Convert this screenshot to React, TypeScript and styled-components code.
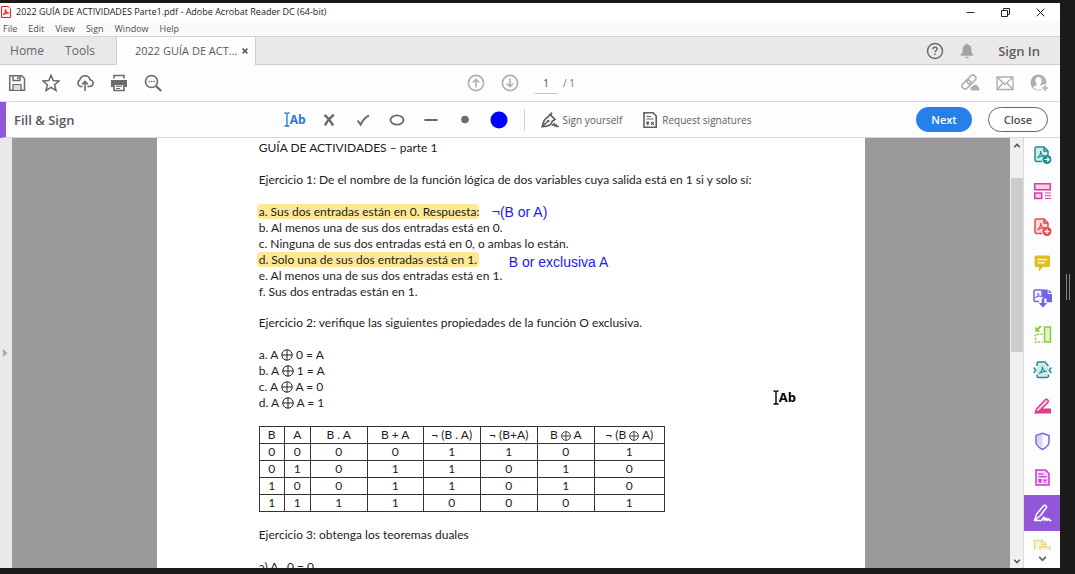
import React from "react";
import styled, { createGlobalStyle, css } from "styled-components";

const UI = `"Open Sans", "Noto Sans", sans-serif`;
const DOC = `Lato, "Open Sans", sans-serif`;
const INK = "#6b6a6c";

const GlobalStyle = createGlobalStyle`
  * { box-sizing: border-box; }
  html, body, #root { height: 100%; }
  body { margin: 0; background: #1a1a1a; font-family: ${UI}; color: #505050; overflow: hidden; }
  button { font-family: inherit; color: inherit; border: 0; padding: 0; background: none; cursor: pointer; }
  svg { display: block; flex: none; }
`;

const Screen = styled.div`
  display: flex;
  height: 100%;
`;

const AppWindow = styled.div`
  flex: 1;
  min-width: 0;
  display: flex;
  flex-direction: column;
  margin: 3px 0 6px;
  background: #fdfcfe;
  overflow: hidden;
`;

const Edge = styled.div`
  width: 15px;
  display: flex;
  align-items: center;
  justify-content: center;
  gap: 2px;
`;

const GripLine = styled.span`
  width: 1px;
  height: 26px;
  background: #858585;
`;

const TitleBar = styled.header`
  display: flex;
  align-items: center;
  height: 18px;
  padding-right: 2px;
  background: #fff;
`;

const WindowTitle = styled.h1`
  flex: 1;
  margin: 0 0 0 4px;
  font-size: 9px;
  line-height: 16px;
  font-weight: 400;
  color: #222;
  white-space: nowrap;
`;

const WindowButton = styled.button`
  display: flex;
  width: 35px;
  height: 16px;
  align-items: center;
  justify-content: center;
`;

const MenuBar = styled.nav`
  display: flex;
  gap: 11px;
  height: 15px;
  padding-left: 3px;
  background: #fbfafb;
`;

const MenuItem = styled.button`
  font-size: 9px;
  line-height: 15px;
`;

const TabBar = styled.div`
  display: flex;
  height: 29px;
  background: #eae8eb;
  border-top: 1px solid #d5d3d6;
  border-bottom: 1px solid #d0ced1;
`;

const Tab = styled.button<{ $width: number }>`
  width: ${(p) => p.$width}px;
  font-size: 12px;
  line-height: 27px;
  color: #666;
`;

const TabGroup = styled.div`
  display: flex;
  width: 116px;
  padding-left: 2px;
`;

const OpenTab = styled.div`
  display: flex;
  align-items: center;
  justify-content: space-between;
  width: 140px;
  height: 28px;
  padding: 0 7px 0 18px;
  background: #fdfcfe;
  border: solid #d0ced1;
  border-width: 0 1px;
  font-size: 11px;
  line-height: 28px;
  color: #5a5a5a;
`;

const Account = styled.div`
  display: flex;
  align-items: center;
  gap: 14px;
  margin-left: auto;
  padding-right: 20px;
`;

const SignIn = styled.button`
  margin-left: 8px;
  font-size: 13px;
  line-height: 26px;
  font-weight: 600;
  color: #5f5e60;
`;

const Bar = styled.div<{ $accent?: boolean }>`
  display: grid;
  grid-template-columns: 1fr auto 1fr;
  align-items: center;
  height: ${(p) => (p.$accent ? 36 : 37)}px;
  padding: 0 12px 0 8px;
  border-bottom: 1px solid #d9d8da;
  ${(p) =>
    p.$accent &&
    css`
      border-left: 6px solid #9256d9;
      padding-left: 8px;
    `}
`;

const Group = styled.div<{ $gap: number; $end?: boolean; $trail?: number }>`
  display: flex;
  align-items: center;
  gap: ${(p) => p.$gap}px;
  justify-content: ${(p) => (p.$end ? "flex-end" : "flex-start")};
  padding-right: ${(p) => p.$trail ?? 0}px;
`;

const IconButton = styled.button<{ $color?: string }>`
  display: flex;
  width: 18px;
  height: 18px;
  align-items: center;
  justify-content: center;
  color: ${(p) => p.$color ?? INK};
`;

const PageBox = styled.label`
  display: flex;
  align-items: center;
  gap: 6px;
  font-size: 10px;
  line-height: 20px;
  color: #777;
`;

const PageInput = styled.input`
  width: 22px;
  height: 21px;
  padding: 0;
  border: 0;
  border-bottom: 1px solid #c4c2c5;
  background: none;
  font: inherit;
  color: #5a4148;
  text-align: center;
`;

const ToolTitle = styled.h2`
  margin: 0;
  font-size: 13px;
  line-height: 20px;
  font-weight: 600;
  color: #5a595b;
`;

const Divider = styled.span`
  width: 1px;
  height: 22px;
  background: #d0ced1;
`;

const TextTool = styled.button`
  display: flex;
  align-items: center;
  gap: 4px;
  font-size: 10px;
  line-height: 20px;
  color: #606060;
  white-space: nowrap;
`;

const Pill = styled.button<{ $primary?: boolean }>`
  width: ${(p) => (p.$primary ? 56 : 60)}px;
  height: 25px;
  border-radius: 13px;
  font-size: 11px;
  font-weight: 600;
  ${(p) =>
    p.$primary
      ? css`
          background: #2680eb;
          color: #fff;
        `
      : css`
          background: #fff;
          border: 1px solid #666;
        `}
`;

const Workspace = styled.div`
  flex: 1;
  min-height: 0;
  display: flex;
`;

const NavStrip = styled.button`
  width: 12px;
  display: flex;
  align-items: center;
  padding-left: 3px;
  background: #eae8eb;
  color: #aaa8ab;
`;

const Viewer = styled.main`
  flex: 1;
  min-width: 0;
  display: flex;
  justify-content: center;
  background: #9b999b;
  overflow: hidden;
`;

const Sheet = styled.article`
  position: relative;
  width: 71%;
  padding: 2px 0 0 102px;
  background: #fff;
  font-family: ${DOC};
  font-size: 12px;
  line-height: 16px;
  color: #1c1c1c;
  white-space: nowrap;
`;

const Para = styled.p`
  margin: 0 0 16px;
`;

const Lines = styled.ul`
  list-style: none;
  margin: 0 0 15px;
  padding: 0;
`;

const Highlight = styled.mark`
  margin: 0 -2px;
  padding: 0 2px;
  border-radius: 4px;
  background: #fee893;
  color: inherit;
`;

const Note = styled.span<{ $x: number; $y: number }>`
  position: absolute;
  left: ${(p) => p.$x}px;
  top: ${(p) => p.$y}px;
  font-family: "Liberation Sans", Arial, sans-serif;
  font-size: 14px;
  line-height: 16px;
  color: #1a1af0;
`;

const Pointer = styled.span`
  position: absolute;
  left: 616px;
  top: 251px;
`;

const TruthTable = styled.table`
  width: 405px;
  margin-bottom: 15px;
  table-layout: fixed;
  border-collapse: collapse;
  th, td {
    height: 17px;
    padding: 0;
    border: 1px solid #333;
    font-weight: 400;
    line-height: 16px;
    text-align: center;
  }
`;

const OplusSvg = styled.svg`
  display: inline-block;
  vertical-align: -2px;
`;

const Scrollbar = styled.div`
  display: flex;
  flex-direction: column;
  align-items: center;
  justify-content: space-between;
  width: 14px;
  padding: 5px 0 4px;
  background: #f1eff2;
  border-right: 1px solid #dddbde;
  color: #555;
`;

const Thumb = styled.div`
  width: 12px;
  height: 174px;
  margin: 30px 0 auto;
  background: #cdcbce;
`;

const Rail = styled.aside`
  display: flex;
  flex-direction: column;
  width: 36px;
`;

const RailTool = styled.button<{ $active?: boolean }>`
  flex: 1;
  min-height: 0;
  display: flex;
  align-items: center;
  justify-content: center;
  background: ${(p) => (p.$active ? "#9256d9" : "transparent")};
`;

const RailMore = styled.button`
  height: 37px;
  display: flex;
  flex-direction: column;
  align-items: center;
  gap: 6px;
  padding-top: 8px;
  color: #666;
`;

const GlyphBox = styled.span<{ $color: string; $large?: boolean }>`
  display: flex;
  align-items: center;
  font-family: ${UI};
  font-size: ${(p) => (p.$large ? 13 : 12)}px;
  line-height: 16px;
  font-weight: 700;
  color: ${(p) => p.$color};
`;

function TextGlyph({ color, large }: { color: string; large?: boolean }) {
  return (
    <GlyphBox $color={color} $large={large}>
      <svg width="6" height="15" viewBox="0 0 6 15" fill="none" stroke="currentColor" strokeWidth={large ? 1.4 : 1.3} aria-hidden="true">
        <path d="M.5 1h2M3.500 1h2M3 1v13M.5 14h5" />
      </svg>
      Ab
    </GlyphBox>
  );
}

type IconProps = { w?: number; h?: number; sw?: number; children: React.ReactNode };

const Icon = ({ w = 18, h = 18, sw = 1.6, children }: IconProps) => (
  <svg width={w} height={h} viewBox={`0 0 ${w} ${h}`} fill="none" stroke="currentColor" strokeWidth={sw} aria-hidden="true">
    {children}
  </svg>
);

const Oplus = ({ size = 12 }: { size?: number }) => (
  <OplusSvg width={size} height={size} viewBox="0 0 12 12" fill="none" stroke="#222" role="img" aria-label="xor">
    <circle cx="6" cy="6" r="5.2" />
    <path d="M6 .8v10.4M.8 6h10.4" />
  </OplusSvg>
);

const Chevron = ({ up, w = 8 }: { up?: boolean; w?: number }) => (
  <svg width={w} height={w === 8 ? 5 : 6} viewBox="0 0 8 5" fill="none" stroke="currentColor" strokeWidth="1.5" aria-hidden="true">
    <path d={up ? "M1.2 4.2 4 1.4l2.8 2.8" : "M1.2.8 4 3.6 6.8.8"} />
  </svg>
);

const PdfMark = ({ x = 0, y = 0 }: { x?: number; y?: number }) => (
  <path
    transform={`translate(${x} ${y})`}
    strokeWidth="1.1"
    d="M1.300 8.500C3.500 7.300 4.700 5 4.600 1.500 4.800 4.500 6 6.300 8.800 6.500 6 6.200 3.500 6.900 1.300 8.500z"
  />
);

const railIcons: { name: string; color: string; art: React.ReactNode; active?: boolean }[] = [
  {
    name: "Export PDF",
    color: "#1f9090",
    art: (
      <>
        <path d="M9 15.500H3.500A1.500 1.500 0 0 1 2 14V2.500A1.500 1.500 0 0 1 3.500 1H11l4 4v4" fill="#d2e9ea" />
        <path d="M11 1v4h4" />
        <PdfMark x={3} y={3.5} />
        <circle cx="14" cy="13.5" r="4.500" fill="currentColor" stroke="none" />
        <path d="M11.500 13.500h4.500M14.200 11.500l2 2-2 2" stroke="#fff" strokeWidth="1.200" />
      </>
    ),
  },
  {
    name: "Organize Pages",
    color: "#dc3d9c",
    art: (
      <>
        <path d="M1.700 1.700h15.600v6H1.700zM1.700 11h7v5.500h-7z" fill="#f7cfe6" />
        <path d="M12 11h6M12 13.700h6M12 16.400h6" strokeWidth="1" />
      </>
    ),
  },
  {
    name: "Create PDF",
    color: "#e34850",
    art: (
      <>
        <path d="M9 15.500H3.500A1.500 1.500 0 0 1 2 14V2.500A1.500 1.500 0 0 1 3.500 1H11l4 4v4" fill="#fbd9da" />
        <path d="M11 1v4h4" />
        <PdfMark x={3} y={3.5} />
        <circle cx="14" cy="13.5" r="4.500" fill="currentColor" stroke="none" />
        <path d="M11.500 13.500h5M14 11v5" stroke="#fff" strokeWidth="1.300" />
      </>
    ),
  },
  {
    name: "Comment",
    color: "#dfbf22",
    art: (
      <>
        <path d="M3 1.500h12.500a1.500 1.500 0 0 1 1.500 1.500v8.500a1.500 1.500 0 0 1-1.500 1.500H10l-4 4.500V13H3a1.500 1.500 0 0 1-1.500-1.500V3A1.500 1.500 0 0 1 3 1.500z" fill="currentColor" stroke="none" />
        <path d="M4.500 5.500h9.500M4.500 8.800h7.500" stroke="#fff6d0" strokeWidth="1.500" />
      </>
    ),
  },
  {
    name: "Combine Files",
    color: "#6e62e8",
    art: (
      <>
        <path d="M6 12.500H2.200A1.200 1.200 0 0 1 1 11.300V2.200A1.200 1.200 0 0 1 2.200 1H9v7" />
        <path d="M9.500.5h5.200V5H19v7.300a1 1 0 0 1-1 1h-4.500V9.500h-4z" fill="currentColor" stroke="none" />
        <path d="M15.700.5 19 4h-3.300z" fill="currentColor" stroke="none" />
        <path d="M2.500 8.500C4.300 7.500 5 6 5 4c.3 2 1.200 3 3 3.500-2-.3-3.500 0-5.500 1z" strokeWidth="1" />
        <path d="M8.700 9.500h2.600v4.500h3L10 18.500 5.700 14h3z" fill="currentColor" stroke="none" />
      </>
    ),
  },
  {
    name: "Compare Files",
    color: "#8acb3c",
    art: (
      <>
        <path d="M11.500 2h6v15h-6z" fill="#e0f2c9" />
        <path d="M9.500 9.200H2.500v7.800h7" strokeDasharray="2 1.500" />
        <path d="M2.300 6.700V1.500L4 3.200 6.500 1h2.800L5.700 4.800l1.800 1.900z" fill="currentColor" stroke="none" />
      </>
    ),
  },
  {
    name: "Compress PDF",
    color: "#1f9090",
    art: (
      <>
        <path d="M4 4h11v11H4z" fill="#d2e9ea" stroke="none" />
        <path d="M4 5V2.500A1.500 1.500 0 0 1 5.500 1H12l3.500 4M15.500 13.500V15a1.500 1.500 0 0 1-1.500 1.500H5.500A1.500 1.500 0 0 1 4 15v-1.500" fill="#d2e9ea" />
        <path d="M.7 6.500 2.800 9.200.7 12M18.300 6.500l-2.100 2.700 2.100 2.800" />
        <PdfMark x={4.7} y={4} />
      </>
    ),
  },
  {
    name: "Redact",
    color: "#dc3d8c",
    art: (
      <>
        <path d="M3.500 12 12 3a1.800 1.800 0 0 1 2.800 0 1.800 1.800 0 0 1 0 2.500L6.500 14 2.500 15.500z" fill="#f9d3e5" />
        <path d="M1 16.500 5 14l3-2.500h10v5z" fill="currentColor" stroke="none" />
      </>
    ),
  },
  {
    name: "Protect",
    color: "#6e6be6",
    art: (
      <>
        <path d="M9.500 2.500v13.500c-3-1.800-5.500-3.700-5.500-6V4.300z" fill="#d7d6f8" stroke="none" />
        <path d="M9.500 1.200 16 3.500v6.500c0 3-2.800 5.500-6.500 7.500C5.800 15.500 3 13 3 10V3.500z" />
      </>
    ),
  },
  {
    name: "Request Signatures",
    color: "#c43bd0",
    art: (
      <>
        <path d="M3 2h9.500L16 5.500V17H3z" fill="#f4d6f6" />
        <path d="M5.500 6.200h5M5.500 8.600h8" strokeWidth="1.200" />
        <path d="M5.500 11h3v2.500L7 15.500l-1.500-2z" fill="currentColor" stroke="none" />
        <path d="m10.500 11.500 3 3M13.500 11.500l-3 3" strokeWidth="1.200" />
      </>
    ),
  },
  {
    name: "Fill & Sign",
    color: "#fff",
    active: true,
    art: (
      <path
        d="M1.500 16.500 3.700 10 10.500 1.800a1.500 1.500 0 0 1 2.400 0 1.600 1.600 0 0 1 .2 2.200L7.500 11.500 1.500 16.500zM1.500 16.500h7l2.500-3.500.5 3.500 2-2.500.6 2.500 1.700-1.700.7 1.700h2"
        strokeLinejoin="round"
      />
    ),
  },
];

const SignatureForm = () => (
  <Icon w={16} h={18}>
    <path d="M2 1.800h9L14.200 5v11.200H2z" />
    <path d="M4.500 5.500h4.500M4.500 8h7" strokeWidth="1" />
    <path d="M4.300 10.500H7v2.300L5.700 14.500 4.300 12.800z" fill="currentColor" stroke="none" />
    <path d="m9 11 2.800 2.800M11.800 11 9 13.800" strokeWidth="1.100" />
  </Icon>
);

const heads: React.ReactNode[] = [
  "B",
  "A",
  "B . A",
  "B + A",
  "¬ (B . A)",
  "¬ (B+A)",
  <>B <Oplus size={10} /> A</>,
  <>¬ (B <Oplus size={10} /> A)</>,
];
const colWidths = [25, 26, 57, 56, 57, 57, 57, 70];
const rows = ["00001101", "01011010", "10011010", "11110001"];

export default function App() {
  return (
    <>
      <GlobalStyle />
      <Screen>
        <AppWindow>
          <TitleBar>
            <svg width="12" height="14" viewBox="0 0 12 14" fill="none" stroke="#e8222c" aria-hidden="true">
              <path d="M1.500 1.500h6.800l2.200 2.200v8.800h-9z" fill="#fff0f0" />
              <path d="M3 9.700c2-.8 2.700-3 2.500-5.500.2 2.500 1.500 3.800 3.500 4-2.500-.3-4 0-6 1.500z" strokeWidth="1.200" />
            </svg>
            <WindowTitle>2022 GUÍA DE ACTIVIDADES Parte1.pdf - Adobe Acrobat Reader DC (64-bit)</WindowTitle>
            <WindowButton aria-label="Minimize">
              <Icon w={9} h={9} sw={1}><path d="M.5 4.500h8" stroke="#333" /></Icon>
            </WindowButton>
            <WindowButton aria-label="Restore">
              <Icon w={9} h={9} sw={1}><path d="M.5 2.500h6v6h-6zM2.500 2.500v-2h6v6h-2" stroke="#222" /></Icon>
            </WindowButton>
            <WindowButton aria-label="Close window">
              <Icon w={9} h={9} sw={1}><path d="m.7.7 7.600 7.600M8.300.7.700 8.300" stroke="#222" /></Icon>
            </WindowButton>
          </TitleBar>

          <MenuBar>
            {["File", "Edit", "View", "Sign", "Window", "Help"].map((m) => (
              <MenuItem key={m}>{m}</MenuItem>
            ))}
          </MenuBar>

          <TabBar>
            <TabGroup>
              <Tab $width={50}>Home</Tab>
              <Tab $width={56}>Tools</Tab>
            </TabGroup>
            <OpenTab>
              2022 GUÍA DE ACT...
              <button aria-label="Close tab">
                <Icon w={6} h={6} sw={1.5}><path d="m.6.6 4.800 4.800M5.400.6.600 5.400" /></Icon>
              </button>
            </OpenTab>
            <Account>
              <IconButton aria-label="Help">
                <Icon sw={1.5}>
                  <circle cx="9" cy="9" r="7.500" />
                  <path d="M6.900 7.200C7 5.800 8 5.300 9 5.300c1.300 0 2.100.7 2.100 1.700C11.100 8.500 9 8.500 9 10.300M9 11.500v1.600" />
                </Icon>
              </IconButton>
              <IconButton aria-label="Notifications" $color="#a3a1a4">
                <Icon>
                  <path d="M8 2.500a1 1 0 0 1 2 0c2.500.6 3.300 2.500 3.300 5 0 2.700.4 3.900 2 5.200v1H2.700v-1c1.600-1.300 2-2.500 2-5.200 0-2.500.8-4.400 3.300-5zM7.300 14.700h3.400a1.700 1.700 0 0 1-3.400 0z" fill="currentColor" stroke="none" />
                </Icon>
              </IconButton>
              <SignIn>Sign In</SignIn>
            </Account>
          </TabBar>

          <Bar>
            <Group $gap={16}>
              <IconButton aria-label="Save">
                <Icon sw={1.5}>
                  <path d="M1.700 1.700h12l2.800 2.800v11.800H1.700z" />
                  <path d="M5 2v4.500h7V2M10 2.500V5" />
                  <path d="M5 16v-5.500h8V16" fill="#dddcdf" strokeWidth="1.200" />
                </Icon>
              </IconButton>
              <IconButton aria-label="Star">
                <Icon sw={1.5}>
                  <path d="m9 1.200 2.200 5.400 5.900.4-4.500 3.800 1.400 5.700L9 13.400l-5 3.100 1.400-5.700L.9 7l5.900-.4z" />
                </Icon>
              </IconButton>
              <IconButton aria-label="Upload">
                <Icon>
                  <path d="M6.500 12.500h-2A3.500 3.500 0 0 1 3.800 6C4.500 3.300 6.500 1.800 9 1.800c2.600 0 4.500 1.700 5 4a3.300 3.300 0 0 1-.5 6.700h-2M9 17V8M6 10.500l3-3 3 3" />
                </Icon>
              </IconButton>
              <IconButton aria-label="Print">
                <Icon>
                  <path d="M4 4.500V1.500h10v3" />
                  <path d="M1 6h16v7h-2.500v-2.500h-11V13H1z" fill="currentColor" stroke="none" />
                  <path d="M4 10.500h10v6H4z" fill="#fff" />
                  <path d="M6 12.300h6M6 14.500h4" strokeWidth="1" />
                </Icon>
              </IconButton>
              <IconButton aria-label="Find">
                <Icon>
                  <circle cx="7.500" cy="7.500" r="6" />
                  <path d="m12 12 5.200 5" strokeWidth="2.300" />
                  <path d="M4.500 7.500h6.500" strokeDasharray="1.400 1.100" />
                </Icon>
              </IconButton>
            </Group>
            <Group $gap={16} $trail={14}>
              <IconButton aria-label="Previous page" $color="#b0aeb1">
                <Icon><circle cx="9" cy="9" r="7.600" /><path d="M9 13.500V5.500M5.800 8.500 9 5.300l3.200 3.200" /></Icon>
              </IconButton>
              <IconButton aria-label="Next page" $color="#b0aeb1">
                <Icon><circle cx="9" cy="9" r="7.600" /><path d="M9 4.500v8M5.800 9.500 9 12.700l3.200-3.200" /></Icon>
              </IconButton>
              <PageBox>
                <PageInput defaultValue="1" aria-label="Page number" />
                / 1
              </PageBox>
            </Group>
            <Group $gap={16} $end>
              <IconButton aria-label="Share link" $color="#b0aeb1">
                <Icon w={20} h={18}>
                  <g transform="rotate(-45 8 8)">
                    <rect x="-.5" y="5" width="10" height="6" rx="3" />
                    <rect x="6.500" y="5" width="10" height="6" rx="3" />
                  </g>
                  <path d="M11.500 17a2.500 2.500 0 0 1-.2-5 3.300 3.300 0 0 1 6.200.8 2.200 2.200 0 0 1 0 4.200z" fill="currentColor" stroke="#fdfcfe" strokeWidth="1" />
                </Icon>
              </IconButton>
              <IconButton aria-label="Email" $color="#b0aeb1">
                <Icon sw={1.3}><path d="M1 3h16v12.500H1zM1 3l8 7.500L17 3M1 15.500l6-6.500M17 15.500 11 9" /></Icon>
              </IconButton>
              <IconButton aria-label="Add people" $color="#b0aeb1">
                <Icon>
                  <circle cx="8.500" cy="8.500" r="8" fill="currentColor" stroke="none" />
                  <path d="M8.500 3c2 0 3.200 1.500 3.200 3.500 0 1.700-.7 3-1.500 3.800 0 1.500 2.800 1.500 3.500 3-1 1.500-3 2.500-5.200 2.500s-4.200-1-5.200-2.500c.7-1.500 3.500-1.500 3.500-3-.8-.8-1.500-2.100-1.500-3.800C5.300 4.500 6.500 3 8.500 3z" fill="#fdfcfe" stroke="none" />
                  <circle cx="15" cy="14" r="4" fill="#fdfcfe" stroke="none" />
                  <path d="M12 14h6M15 11v6" />
                </Icon>
              </IconButton>
            </Group>
          </Bar>

          <Bar $accent>
            <ToolTitle>Fill &amp; Sign</ToolTitle>
            <Group $gap={16} $trail={25}>
              <IconButton aria-label="Add text">
                <TextGlyph color="#2a78d0" />
              </IconButton>
              <IconButton aria-label="Cross mark">
                <Icon sw={2.4}><path d="M4.500 4C7 6 11 11 13.200 14.500M13.800 3.800C10.500 6.500 6.500 11 5 14.500" /></Icon>
              </IconButton>
              <IconButton aria-label="Check mark">
                <Icon sw={2}><path d="m3.500 9.500 3.200 4C8.500 9.500 11.500 6 15 4.300" /></Icon>
              </IconButton>
              <IconButton aria-label="Circle">
                <Icon sw={1.8}><ellipse cx="9" cy="9" rx="6.500" ry="4.700" /></Icon>
              </IconButton>
              <IconButton aria-label="Line">
                <Icon sw={2.2}><path d="M3.200 9h11.600" strokeLinecap="round" /></Icon>
              </IconButton>
              <IconButton aria-label="Dot">
                <Icon><circle cx="9" cy="8.500" r="3.800" fill="currentColor" stroke="none" /></Icon>
              </IconButton>
              <IconButton aria-label="Colour" $color="#0000ff">
                <Icon><circle cx="9" cy="9" r="8.500" fill="currentColor" stroke="none" /></Icon>
              </IconButton>
              <Divider />
              <Group $gap={20}>
                <TextTool>
                  <Icon>
                    <path d="M1.200 15.800C2 11 3.500 7.500 7 6l2-2.500 5 5L11 10.500c0 3-3 4.800-9.800 5.300zM1.500 15.500l5-5" />
                    <path d="m9.500 4 1.500-2.500M11 14.800l2-2 .7 2.200 1.500-1.200.8 1.700h1.800" />
                    <circle cx="7.300" cy="10" r="1.300" fill="currentColor" stroke="none" />
                  </Icon>
                  Sign yourself
                </TextTool>
                <TextTool>
                  <SignatureForm />
                  Request signatures
                </TextTool>
              </Group>
            </Group>
            <Group $gap={16} $end>
              <Pill $primary>Next</Pill>
              <Pill>Close</Pill>
            </Group>
          </Bar>

          <Workspace>
            <NavStrip aria-label="Show navigation pane">
              <svg width="5" height="8" viewBox="0 0 5 8" fill="currentColor" aria-hidden="true"><path d="M0 0l4.500 4L0 8z" /></svg>
            </NavStrip>
            <Viewer>
              <Sheet>
                <Para>GUÍA DE ACTIVIDADES – parte 1</Para>
                <Para>Ejercicio 1: De el nombre de la función lógica de dos variables cuya salida está en 1 si y solo sí:</Para>
                <Lines>
                  <li><Highlight>a. Sus dos entradas están en 0. Respuesta</Highlight>:</li>
                  <li>b. Al menos una de sus dos entradas está en 0.</li>
                  <li>c. Ninguna de sus dos entradas está en 0, o ambas lo están.</li>
                  <li><Highlight>d. Solo una de sus dos entradas está en 1.</Highlight></li>
                  <li>e. Al menos una de sus dos entradas está en 1.</li>
                  <li>f. Sus dos entradas están en 1.</li>
                </Lines>
                <Para>Ejercicio 2: verifique las siguientes propiedades de la función O exclusiva.</Para>
                <Lines>
                  <li>a. A <Oplus /> 0 = A</li>
                  <li>b. A <Oplus /> 1 = A</li>
                  <li>c. A <Oplus /> A = 0</li>
                  <li>d. A <Oplus /> A = 1</li>
                </Lines>
                <TruthTable>
                  <colgroup>
                    {colWidths.map((w, i) => <col key={i} width={w} />)}
                  </colgroup>
                  <thead>
                    <tr>{heads.map((h, i) => <th key={i} scope="col">{h}</th>)}</tr>
                  </thead>
                  <tbody>
                    {rows.map((r) => (
                      <tr key={r}>{r.split("").map((v, i) => <td key={i}>{v}</td>)}</tr>
                    ))}
                  </tbody>
                </TruthTable>
                <Para>Ejercicio 3: obtenga los teoremas duales</Para>
                <Para>a) A . 0 = 0</Para>
                <Note $x={335} $y={66}>¬(B or A)</Note>
                <Note $x={352} $y={116}>B or exclusiva A</Note>
                <Pointer><TextGlyph color="#000" large /></Pointer>
              </Sheet>
            </Viewer>
            <Scrollbar>
              <Chevron up />
              <Thumb />
              <Chevron />
            </Scrollbar>
            <Rail>
              {railIcons.map((t) => (
                <RailTool key={t.name} $active={t.active} aria-label={t.name}>
                  <svg width="19" height="19" viewBox="0 0 19 19" fill="none" stroke="currentColor" strokeWidth="1.500" color={t.color} aria-hidden="true">
                    {t.art}
                  </svg>
                </RailTool>
              ))}
              <RailMore aria-label="More tools">
                <svg width="18" height="11" viewBox="0 0 18 11" fill="none" stroke="#ead98a" strokeWidth="1.500" aria-hidden="true">
                  <path d="M1.500 11V1.500h8L13 5v2.500" fill="#fbf4d4" />
                  <path d="M9 1.500V5.500h4M7 11V8h10v3" fill="#fbf4d4" />
                </svg>
                <Chevron w={11} />
              </RailMore>
            </Rail>
          </Workspace>
        </AppWindow>
        <Edge>
          <GripLine />
          <GripLine />
        </Edge>
      </Screen>
    </>
  );
}
